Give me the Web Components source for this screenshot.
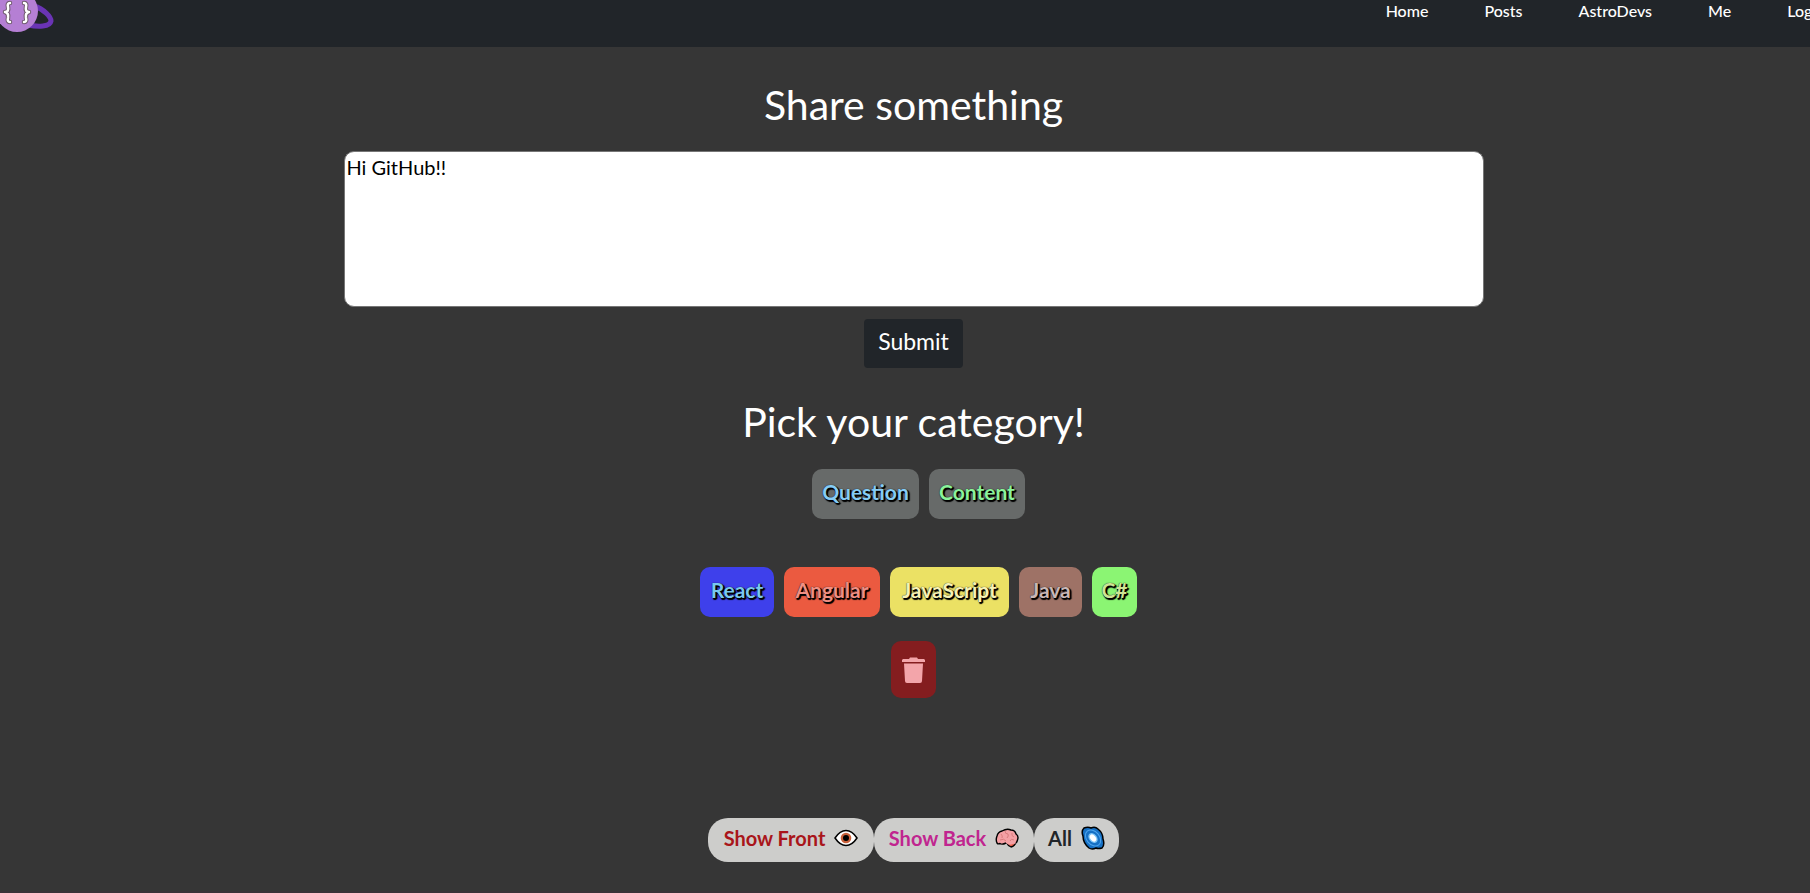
<!DOCTYPE html>
<html lang="en">
<head>
<meta charset="utf-8">
<title>AstroDevs</title>
<style>
body{margin:0;background:#363636;color:#fff;font-family:Lato,"Open Sans",sans-serif;overflow:hidden}
</style>
</head>
<body>
<astro-app></astro-app>
<script>
const define = (name, html) => customElements.define(name, class extends HTMLElement {
  constructor() {
    super();
    this.attachShadow({mode: 'open'}).innerHTML = html;
  }
});

define('astro-logo', `
<style>:host{display:block;width:56px;height:34px}svg{display:block}</style>
<svg width="56" height="34" viewBox="0 0 56 34" aria-hidden="true">
  <path d="M34 6C44 9 51 17 51 21C50 27 38 27 28 25" fill="none" stroke="#6a34b5" stroke-width="5"/>
  <circle cx="17" cy="11" r="21" fill="#b57fd4"/>
  <g fill="none" stroke-linejoin="round" stroke-linecap="round">
    <g stroke="#6f5a6d" stroke-width="4.500"><path d="M10 3Q7 3 8 7Q9 12 5 12Q9 13 8 18Q7 22 10 22"/><path d="M24 3Q27 3 26 7Q25 12 29 12Q25 13 26 18Q27 22 24 22"/></g>
    <g stroke="#fff" stroke-width="2.500"><path d="M10 3Q7 3 8 7Q9 12 5 12Q9 13 8 18Q7 22 10 22"/><path d="M24 3Q27 3 26 7Q25 12 29 12Q25 13 26 18Q27 22 24 22"/></g>
  </g>
</svg>`);

define('nav-link', `
<style>:host{display:block}a{display:block;color:#fff;text-decoration:none;font-size:16px;line-height:22px;font-weight:500;white-space:nowrap}</style>
<a href="#"><slot></slot></a>`);

define('nav-bar', `
<style>
:host{display:block}
header{display:flex;justify-content:space-between;height:47px;background:#212529}
nav{display:flex;gap:56px;flex:none;margin-right:-26px}
</style>
<header><astro-logo></astro-logo>
<nav aria-label="Main"><nav-link>Home</nav-link><nav-link>Posts</nav-link><nav-link>AstroDevs</nav-link><nav-link>Me</nav-link><nav-link>Logout</nav-link></nav></header>`);

define('page-title', `
<style>:host{display:block}h1{margin:0;font-size:41px;line-height:48px;font-weight:400;text-align:center}</style>
<h1><slot></slot></h1>`);

define('post-form', `
<style>
:host{display:block;width:100%}
form{display:flex;flex-direction:column;align-items:center;gap:12px}
textarea{display:block;box-sizing:border-box;width:90%;max-width:1140px;height:156px;padding:2px;border:1px solid #767676;border-radius:10px;background:#fff;color:#000;font:400 20px/26px Lato,sans-serif;resize:none;outline:0}
button{height:49px;padding:0 14px 6px;border:0;border-radius:4px;background:#212529;color:#fff;font:400 23px/30px Lato,sans-serif}
</style>
<form><textarea aria-label="Post">Hi GitHub!!</textarea><button type="button">Submit</button></form>`);

define('tag-button', `
<style>
:host{display:block}
button{height:50px;min-width:var(--w);padding:0 8px 4px;border:0;border-radius:10px;background:var(--bg);color:var(--fg);font:700 21px/30px Lato,sans-serif;text-shadow:1px 1px 0 #000,2px 1px 1px #000,1px 2px 1px #000,0 0 1px #000;white-space:nowrap}
</style>
<button type="button"><slot></slot></button>`);

define('button-row', `
<style>:host{display:flex;justify-content:center;gap:10px;padding-left:10px}</style><slot></slot>`);

define('trash-button', `
<style>
:host{display:block}
button{display:grid;place-items:center;width:45px;height:57px;padding:0;border:0;border-radius:10px;background:#841d1f}
</style>
<button type="button" aria-label="Delete"><svg width="23" height="26" viewBox="0 0 23 26" fill="#f3a5aa"><path d="M1 2H7L8 .5H15L16 2H22L23 3V5H0V3ZM2 6.500H21L20 24Q20 26 18 26H5Q3 26 3 24Z"/></svg></button>`);

define('filter-button', `
<style>
:host{display:block}
button{display:flex;align-items:center;justify-content:center;gap:9px;min-width:var(--w);height:44px;padding:0 12px 4px;border:0;border-radius:20px;background:#cdcdcb;color:var(--fg);font:700 20px/30px Lato,sans-serif;white-space:nowrap}
::slotted(svg){display:block;flex:none}
</style>
<button type="button"><slot></slot><slot name="icon"></slot></button>`);

define('filter-bar', `
<style>:host{display:flex;justify-content:center}</style>
<filter-button style="--fg:#a9151a;--w:166px">Show Front
 <svg slot="icon" width="24" height="24" viewBox="0 0 24 24" aria-hidden="true"><path d="M1 12Q6 4.500 12 4.500T23 12Q18 19.500 12 19.500T1 12Z" fill="#fff" stroke="#000" stroke-width="1.500"/><circle cx="12" cy="12" r="5.300" fill="#c8603a"/><circle cx="12" cy="12" r="3" fill="#000"/></svg>
</filter-button>
<filter-button style="--fg:#c0258f;--w:160px">Show Back
 <svg slot="icon" width="24" height="24" viewBox="0 0 24 24" aria-hidden="true"><path d="M11 16Q13 20 16 21Q20 20 21 16Z" fill="#e8604c" stroke="#000" stroke-width="1.300"/><path d="M2 17Q.5 14 2 10Q3 6 7 5Q12 2 16 4Q20 4 21 8Q24 10 22.500 14Q22 18 18 18Q14 20 11 17Q7 19 5 17.500Q3 18.500 2 17Z" fill="#f4a0a4"/><path d="M11 17Q7 19 5 17.500Q3 18.500 2 17Q.5 14 2 10Q3 6 7 5Q12 2 16 4Q20 4 21 8Q24 10 22.500 14Q22 16 21 17" fill="none" stroke="#000" stroke-width="1.400"/><path d="M6 8Q8 10 7 12M10 5Q10 8 13 8Q14 10 12 12M17 7Q16 10 19 11M5 14Q9 12 11 15M15 15Q16 12 19 14" fill="none" stroke="#d97b7d"/></svg>
</filter-button>
<filter-button style="--fg:#212529;--w:85px">All
 <svg slot="icon" width="24" height="24" viewBox="0 0 24 24" aria-hidden="true"><path d="M3 2Q7 .5 10 2Q14 0 17 3Q22 7 22 13Q24 19 21 22Q17 23 15 22Q11 24 8 22Q2 17 2 10Q0 5 3 2Z" fill="#1670c4" stroke="#000" stroke-width="1.500"/><g fill="none" transform="rotate(50 12 12)"><ellipse cx="12" cy="12" rx="9" ry="6.500" stroke="#4fa6ee"/><ellipse cx="12" cy="12" rx="5.500" ry="4" fill="#7cc4f7"/><ellipse cx="12" cy="12" rx="4" ry="2.600" fill="#fff"/></g></svg>
</filter-button>`);

define('astro-app', `
<style>
:host{display:flex;flex-direction:column;min-height:100vh}
main{display:flex;flex-direction:column;align-items:center;width:calc(100% + 17px);padding-top:34px}
post-form{margin:22px 0 30px}
.kinds{margin:23px 0 48px}
trash-button{margin:24px 0 120px}
footer{height:2px;margin-top:auto;background:#3a3238}
</style>
<nav-bar></nav-bar>
<main>
<page-title>Share something</page-title>
<post-form></post-form>
<page-title>Pick your category!</page-title>
<button-row class="kinds" style="--bg:#676a69"><tag-button style="--fg:#86ccf5;--w:107px">Question</tag-button><tag-button style="--fg:#8bf39b;--w:96px">Content</tag-button></button-row>
<button-row><tag-button style="--bg:#3e40eb;--fg:#79c8ef;--w:74px">React</tag-button><tag-button style="--bg:#eb5a40;--fg:#f08f83;--w:96px">Angular</tag-button><tag-button style="--bg:#ebe164;--fg:#f8f2b4;--w:119px">JavaScript</tag-button><tag-button style="--bg:#9e7266;--fg:#c9b7b6;--w:63px">Java</tag-button><tag-button style="--bg:#8bf573;--fg:#cde494;--w:45px">C#</tag-button></button-row>
<trash-button></trash-button>
<filter-bar></filter-bar>
</main>
<footer></footer>`);
</script>
</body>
</html>
